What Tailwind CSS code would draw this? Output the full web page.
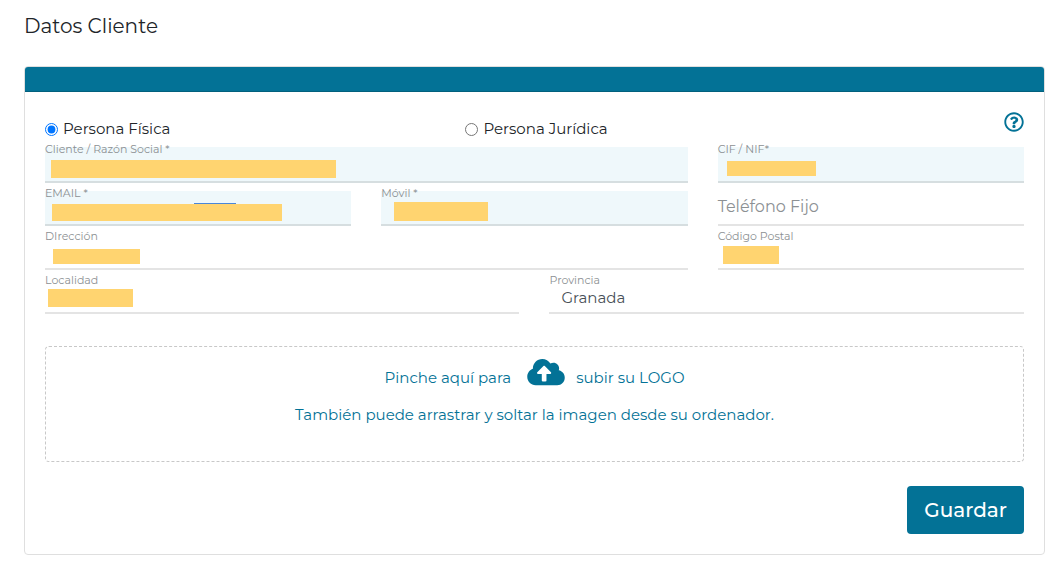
<!DOCTYPE html>
<html lang="es">
<head>
<meta charset="utf-8">
<meta name="viewport" content="width=device-width, initial-scale=1">
<title>Datos Cliente</title>
<script src="https://cdn.jsdelivr.net/npm/@tailwindcss/browser@4"></script>
</head>
<body class="bg-white pl-6 pr-[13px] pt-3 font-['Montserrat','Inter',sans-serif] text-[15px] text-[#212529]">
  <h1 class="text-[20px] leading-7">Datos Cliente</h1>

  <main class="mt-[26px] rounded border border-[#dfdfdf]">
    <div class="h-[25px] rounded-t-[3px] border-b border-[#02607d] bg-[#037296]"></div>

    <form class="px-5 pb-5 pt-5">
      <div class="grid h-[35px] grid-cols-12 items-start gap-x-[30px]">
        <label class="col-span-5 flex items-center gap-[5px] pt-[7px] leading-5"><input type="radio" name="tipo" checked class="size-[13px]">Persona Física</label>
        <label class="col-span-5 flex items-center gap-[5px] pt-[7px] leading-5"><input type="radio" name="tipo" class="size-[13px]">Persona Jurídica</label>
        <button type="button" aria-label="Ayuda" class="col-span-2 justify-self-end text-[#037296]">
          <svg class="size-5" viewBox="0 0 512 512" fill="currentColor"><path d="M256 8C119.043 8 8 119.083 8 256c0 136.997 111.043 248 248 248s248-111.003 248-248C504 119.083 392.957 8 256 8zm0 448c-110.532 0-200-89.431-200-200 0-110.495 89.472-200 200-200 110.491 0 200 89.471 200 200 0 110.53-89.431 200-200 200zm107.244-255.2c0 67.052-72.421 68.084-72.421 92.863V300c0 6.627-5.373 12-12 12h-45.647c-6.627 0-12-5.373-12-12v-8.659c0-35.745 27.1-50.034 47.579-61.516 17.561-9.845 28.324-16.541 28.324-29.579 0-17.246-21.999-28.693-39.784-28.693-23.189 0-33.894 10.977-48.942 29.969-4.057 5.12-11.46 6.071-16.666 2.124l-27.824-21.098c-5.107-3.872-6.251-11.066-2.644-16.363C184.846 131.491 214.94 112 261.794 112c49.071 0 101.45 38.304 101.45 88.8zM298 368c0 23.159-18.841 42-42 42s-42-18.841-42-42 18.841-42 42-42 42 18.841 42 42z"/></svg>
        </button>
      </div>

      <div class="grid grid-cols-12 gap-x-[30px] gap-y-2 text-[#8c9093]">
        <div class="relative col-span-8">
          <label for="cliente" class="absolute -top-1 left-0 text-[11px] leading-3">Cliente / Razón Social *</label>
          <input id="cliente" required class="block h-9 w-full border-b-2 border-[#d6dee0] bg-[#eff8fb] px-3 outline-none">
          <span class="absolute left-[6px] top-[13px] h-[18px] w-[285px] bg-[#ffd470]"></span>
        </div>
        <div class="relative col-span-4">
          <label for="cif" class="absolute -top-1 left-0 text-[11px] leading-3">CIF / NIF*</label>
          <input id="cif" required class="block h-9 w-full border-b-2 border-[#d6dee0] bg-[#eff8fb] px-3 outline-none">
          <span class="absolute left-[9px] top-[14px] h-[15px] w-[89px] bg-[#ffd470]"></span>
        </div>

        <div class="relative col-span-4">
          <label for="email" class="absolute -top-1 left-0 text-[11px] leading-3">EMAIL *</label>
          <input id="email" type="email" required class="block h-[35px] w-full border-b-2 border-[#d6dee0] bg-[#eff8fb] px-3 outline-none">
          <span class="absolute left-[149px] top-3 h-px w-[42px] bg-[#4a86d8]"></span>
          <span class="absolute left-[7px] top-[13px] h-[17px] w-[230px] bg-[#ffd470]"></span>
        </div>
        <div class="relative col-span-4">
          <label for="movil" class="absolute -top-1 left-0 text-[11px] leading-3">Móvil *</label>
          <input id="movil" type="tel" required class="block h-[35px] w-full border-b-2 border-[#d6dee0] bg-[#eff8fb] px-3 outline-none">
          <span class="absolute left-[13px] top-[11px] h-[19px] w-[94px] bg-[#ffd470]"></span>
        </div>
        <div class="relative col-span-4">
          <label for="fijo" class="absolute left-0 top-1 text-[16px] leading-6">Teléfono Fijo</label>
          <input id="fijo" type="tel" class="block h-[35px] w-full border-b-2 border-[#e4e4e4] px-3 outline-none">
        </div>

        <div class="relative col-span-8">
          <label for="direccion" class="absolute -top-1 left-0 text-[11px] leading-3">DIrección</label>
          <input id="direccion" class="block h-9 w-full border-b-2 border-[#e4e4e4] px-3 outline-none">
          <span class="absolute left-2 top-[15px] h-[15px] w-[87px] bg-[#ffd470]"></span>
        </div>
        <div class="relative col-span-4">
          <label for="cp" class="absolute -top-1 left-0 text-[11px] leading-3">Código Postal</label>
          <input id="cp" class="block h-9 w-full border-b-2 border-[#e4e4e4] px-3 outline-none">
          <span class="absolute left-[5px] top-3 h-[18px] w-14 bg-[#ffd470]"></span>
        </div>

        <div class="relative col-span-6">
          <label for="localidad" class="absolute -top-1 left-0 text-[11px] leading-3">Localidad</label>
          <input id="localidad" class="block h-9 w-full border-b-2 border-[#e4e4e4] px-3 outline-none">
          <span class="absolute left-[3px] top-[11px] h-[18px] w-[85px] bg-[#ffd470]"></span>
        </div>
        <div class="relative col-span-6">
          <label for="provincia" class="absolute -top-1 left-0 text-[11px] leading-3">Provincia</label>
          <select id="provincia" class="block h-9 w-full appearance-none border-b-2 border-[#e4e4e4] px-3 pt-[6px] text-[#495057] outline-none">
            <option>Granada</option>
          </select>
        </div>
      </div>

      <button type="button" class="mt-8 block h-[116px] w-full rounded border border-dashed border-[#c8c8c8] pb-[26px] text-[#037296]">
        <span class="flex items-end justify-center">
          <span class="leading-5">Pinche aquí para</span>
          <svg class="mb-px ml-4 mr-[11px] h-[30px] w-[38px]" viewBox="0 0 640 512" fill="currentColor"><path d="M537.6 226.6c4.1-10.7 6.4-22.4 6.4-34.6 0-53-43-96-96-96-19.7 0-38.1 6-53.3 16.2C367 64.2 315.3 32 256 32c-88.4 0-160 71.6-160 160 0 2.7.1 5.4.2 8.1C40.2 219.8 0 273.2 0 336c0 79.5 64.5 144 144 144h368c70.7 0 128-57.3 128-128 0-61.9-44-113.6-102.4-125.4zM393.4 288H328v112c0 8.8-7.2 16-16 16h-48c-8.8 0-16-7.2-16-16V288h-65.4c-14.3 0-21.4-17.2-11.3-27.4l105.4-105.4c6.2-6.2 16.4-6.2 22.6 0l105.4 105.4c10.1 10.2 2.9 27.4-11.3 27.4z"/></svg>
          <span class="leading-5">subir su LOGO</span>
        </span>
        <span class="mt-[17px] block leading-5">También puede arrastrar y soltar la imagen desde su ordenador.</span>
      </button>

      <div class="mt-6 flex justify-end">
        <button type="submit" class="h-12 rounded bg-[#037296] px-[17px] text-[20px] font-medium leading-7 text-white">Guardar</button>
      </div>
    </form>
  </main>
</body>
</html>
